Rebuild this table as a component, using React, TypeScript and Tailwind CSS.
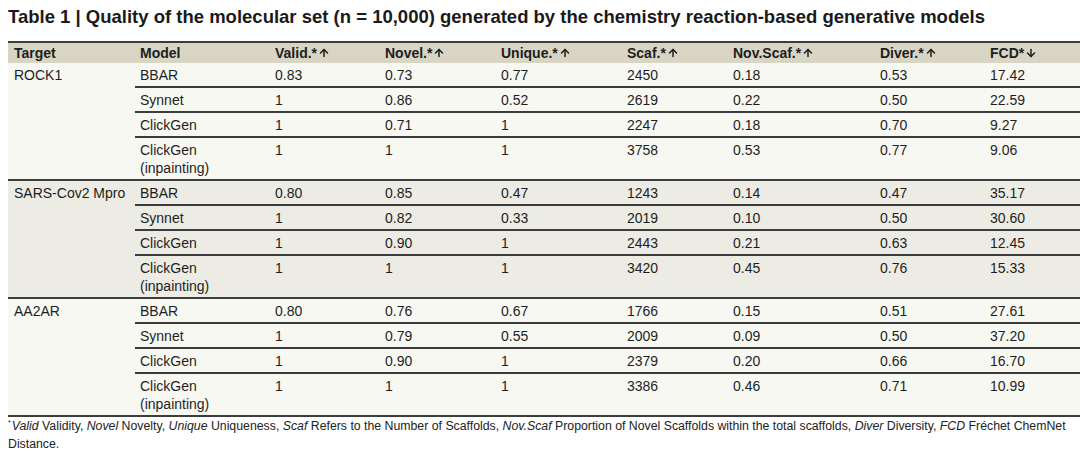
import React from 'react';
import { ArrowUp, ArrowDown } from 'lucide-react';

type Row = { model: string[]; vals: string[] };
type Group = { target: string; shade: boolean; rows: Row[] };

const cols = ['w-[135px]', 'w-[110px]', 'w-[116px]', 'w-[126px]', 'w-[106px]', 'w-[147px]', 'w-[110px]', 'flex-1'];

const headers: [string, 'up' | 'down' | ''][] = [
  ['Model', ''],
  ['Valid.*', 'up'],
  ['Novel.*', 'up'],
  ['Unique.*', 'up'],
  ['Scaf.*', 'up'],
  ['Nov.Scaf.*', 'up'],
  ['Diver.*', 'up'],
  ['FCD*', 'down'],
];

const groups: Group[] = [
  {
    target: 'ROCK1',
    shade: false,
    rows: [
      { model: ['BBAR'], vals: ['0.83', '0.73', '0.77', '2450', '0.18', '0.53', '17.42'] },
      { model: ['Synnet'], vals: ['1', '0.86', '0.52', '2619', '0.22', '0.50', '22.59'] },
      { model: ['ClickGen'], vals: ['1', '0.71', '1', '2247', '0.18', '0.70', '9.27'] },
      { model: ['ClickGen', '(inpainting)'], vals: ['1', '1', '1', '3758', '0.53', '0.77', '9.06'] },
    ],
  },
  {
    target: 'SARS-Cov2 Mpro',
    shade: true,
    rows: [
      { model: ['BBAR'], vals: ['0.80', '0.85', '0.47', '1243', '0.14', '0.47', '35.17'] },
      { model: ['Synnet'], vals: ['1', '0.82', '0.33', '2019', '0.10', '0.50', '30.60'] },
      { model: ['ClickGen'], vals: ['1', '0.90', '1', '2443', '0.21', '0.63', '12.45'] },
      { model: ['ClickGen', '(inpainting)'], vals: ['1', '1', '1', '3420', '0.45', '0.76', '15.33'] },
    ],
  },
  {
    target: 'AA2AR',
    shade: false,
    rows: [
      { model: ['BBAR'], vals: ['0.80', '0.76', '0.67', '1766', '0.15', '0.51', '27.61'] },
      { model: ['Synnet'], vals: ['1', '0.79', '0.55', '2009', '0.09', '0.50', '37.20'] },
      { model: ['ClickGen'], vals: ['1', '0.90', '1', '2379', '0.20', '0.66', '16.70'] },
      { model: ['ClickGen', '(inpainting)'], vals: ['1', '1', '1', '3386', '0.46', '0.71', '10.99'] },
    ],
  },
];

// footnote abbreviations: italic label + plain meaning
const notes: [string, string][] = [
  ['Valid', 'Validity'],
  ['Novel', 'Novelty'],
  ['Unique', 'Uniqueness'],
  ['Scaf', 'Refers to the Number of Scaffolds'],
  ['Nov.Scaf', 'Proportion of Novel Scaffolds within the total scaffolds'],
  ['Diver', 'Diversity'],
  ['FCD', 'Fréchet ChemNet'],
];

function DataRow({ row, first }: { row: Row; first: boolean }) {
  return (
    <div className={`flex ${first ? '' : 'border-t-2 border-[#3c3c3c]'}`}>
      <div className={`${cols[0]} pl-[5px] pt-[3px] pb-[2px]`}>
        {row.model.map((m) => (
          <div key={m}>{m}</div>
        ))}
      </div>
      {row.vals.map((v, i) => (
        <div key={i} className={`${cols[i + 1]} pl-[5px] pt-[3px] pb-[2px]`}>
          {v}
        </div>
      ))}
    </div>
  );
}

export default function App() {
  return (
    <div className="w-[1080px] h-[458px] bg-white text-[#1e1e1e] font-['Liberation_Sans',Arial,sans-serif] overflow-hidden">
      <h1 className="pl-[8px] pt-[7px] text-[18.5px] leading-[20px] font-bold text-[#1a1a1a] whitespace-nowrap">
        Table 1 | Quality of the molecular set (n = 10,000) generated by the chemistry reaction-based generative models
      </h1>

      <div className="ml-[8px] mt-[14px] border-t-2 border-b-2 border-[#3c3c3c] text-[14px] leading-[18px]">
        <div className="flex bg-[#d8d5c5] font-bold pt-[1px] pb-[1px]">
          <div className="w-[127px] pl-[6px]">Target</div>
          {headers.map(([h, arrow], i) => (
            <div key={h} className={`${cols[i]} pl-[5px] flex items-center`}>
              {h}
              {arrow === 'up' && <ArrowUp size={12} strokeWidth={3} className="ml-[1px]" />}
              {arrow === 'down' && <ArrowDown size={12} strokeWidth={3} className="ml-[1px]" />}
            </div>
          ))}
        </div>

        {groups.map((g, gi) => (
          <div
            key={g.target}
            className={`flex ${g.shade ? 'bg-[#ecebe4]' : 'bg-[#f8f8f3]'} ${gi === 0 ? '' : 'border-t-2 border-[#3c3c3c]'}`}
          >
            <div className="w-[127px] pl-[6px] pt-[3px] whitespace-nowrap">{g.target}</div>
            <div className="flex-1">
              {g.rows.map((r, ri) => (
                <DataRow key={ri} row={r} first={ri === 0} />
              ))}
            </div>
          </div>
        ))}
      </div>

      <div className="pl-[8px] text-[12.3px] leading-[18px] text-[#222]">
        <p className="whitespace-nowrap">
          <span className="text-[7px] align-top leading-[12px] mr-[1px]">*</span>
          {notes.map(([abbr, meaning], i) => (
            <React.Fragment key={abbr}>
              <i>{abbr} </i>
              {meaning}
              {i < notes.length - 1 ? ', ' : ''}
            </React.Fragment>
          ))}
        </p>
        <p>Distance.</p>
      </div>
    </div>
  );
}
